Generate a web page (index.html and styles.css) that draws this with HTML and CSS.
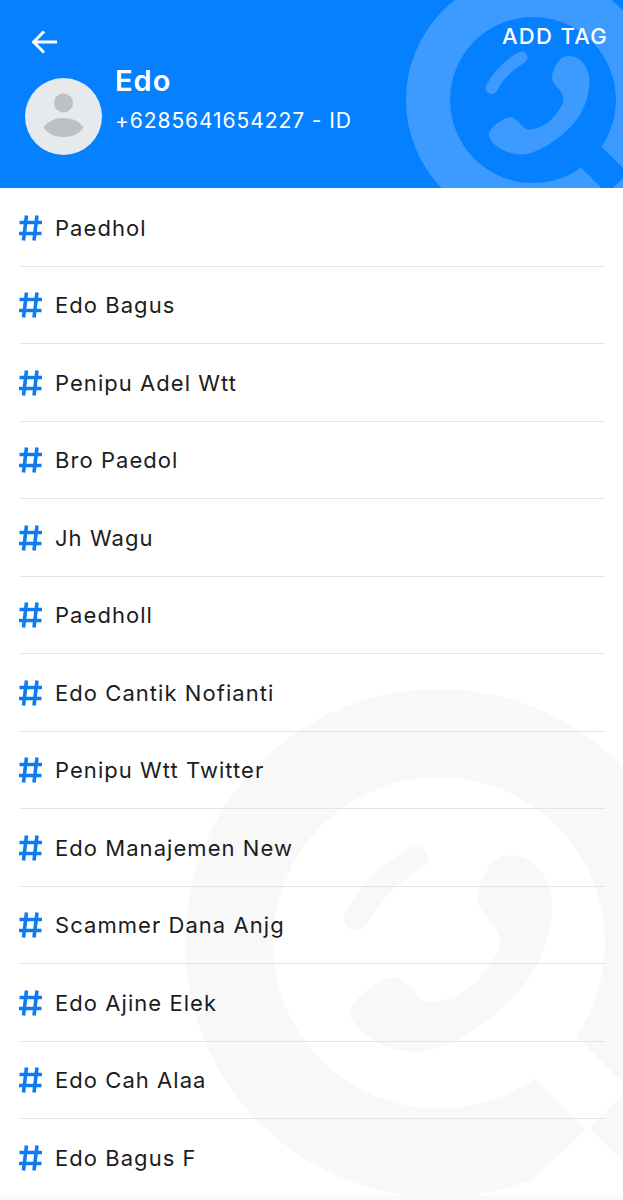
FILE: index.html
```html
<!DOCTYPE html>
<html lang="en">
<head>
    <meta charset="UTF-8">
    <meta name="viewport" content="width=device-width, initial-scale=1.0">
    <title>Edo - Tags</title>
    <link rel="stylesheet" href="styles.css">
</head>
<body>

<svg class="defs" width="0" height="0">
    <!-- Q shaped logo, origin is the centre of the ring -->
    <symbol id="logo" viewBox="-260 -260 520 520" overflow="visible">
        <circle class="logo-mark logo-ring" cx="0" cy="0" r="210"/>
        <polygon class="logo-cut" points="100,56 240,196 240,320 90,240 147,186 57,96"/>
        <polygon class="logo-mark" points="151,185 190,146 262,218 223,257"/>
        <path class="logo-arc" d="M-23,-85 Q-60,-65 -83,-24"/>
        <path class="logo-mark" d="M72,-88 C95,-88 113,-65 113,-38 C113,0 95,35 72,57 C40,88 0,110 -25,109 C-50,108 -75,96 -86,78 C-92,68 -88,60 -72,47 C-60,38 -50,33 -42,35 C-32,37 -25,50 -16,57 C-8,62 12,58 31,44 C48,30 62,8 61,-3 C60,-15 48,-25 41,-35 C36,-43 38,-55 46,-70 C52,-82 62,-88 72,-88Z"/>
    </symbol>
    <symbol id="hash" viewBox="0 0 25 26">
        <path d="M8.500,0.500 L5.500,25.500 M19,0.500 L16,25.500 M1.500,7.500 H24 M1,18.500 H23.500"/>
    </symbol>
</svg>

<header class="header">
    <svg class="logo logo-small"><use href="#logo"/></svg>
    <div class="top-bar">
        <svg class="back-icon" viewBox="0 0 26 24">
            <path d="M25,12 H2 M12,1.500 L1.500,12 L12,22.500"/>
        </svg>
        <span class="add-tag">ADD TAG</span>
    </div>
    <div class="profile">
        <div class="avatar">
            <svg viewBox="0 0 77 77">
                <circle cx="38.500" cy="25" r="9.500"/>
                <path d="M18.500,49.500 C23,43 30,40 38.500,40 C47,40 54,43 58.500,49.500 C54,56 47,59 38.500,59 C30,59 23,56 18.500,49.500Z"/>
            </svg>
        </div>
        <div class="profile-text">
            <div class="name">Edo</div>
            <div class="phone">+6285641654227 - ID</div>
        </div>
    </div>
</header>

<main class="list">
    <svg class="logo logo-large"><use href="#logo"/></svg>
    <div class="row"><svg class="hash"><use href="#hash"/></svg><span>Paedhol</span></div>
    <div class="row"><svg class="hash"><use href="#hash"/></svg><span>Edo Bagus</span></div>
    <div class="row"><svg class="hash"><use href="#hash"/></svg><span>Penipu Adel Wtt</span></div>
    <div class="row"><svg class="hash"><use href="#hash"/></svg><span>Bro Paedol</span></div>
    <div class="row"><svg class="hash"><use href="#hash"/></svg><span>Jh Wagu</span></div>
    <div class="row"><svg class="hash"><use href="#hash"/></svg><span>Paedholl</span></div>
    <div class="row"><svg class="hash"><use href="#hash"/></svg><span>Edo Cantik Nofianti</span></div>
    <div class="row"><svg class="hash"><use href="#hash"/></svg><span>Penipu Wtt Twitter</span></div>
    <div class="row"><svg class="hash"><use href="#hash"/></svg><span>Edo Manajemen New</span></div>
    <div class="row"><svg class="hash"><use href="#hash"/></svg><span>Scammer Dana Anjg</span></div>
    <div class="row"><svg class="hash"><use href="#hash"/></svg><span>Edo Ajine Elek</span></div>
    <div class="row"><svg class="hash"><use href="#hash"/></svg><span>Edo Cah Alaa</span></div>
    <div class="row"><svg class="hash"><use href="#hash"/></svg><span>Edo Bagus F</span></div>
</main>

</body>
</html>
```

FILE: styles.css
```css
html, body {
    margin: 0;
    height: 1200px;
    overflow: hidden;
}
body {
    font-family: Inter, "Liberation Sans", sans-serif;
    background-color: #fafafa;
    color: #1c1c1c;
}
.defs {
    position: absolute;
}

/* Watermark logo, used in the header and behind the list */
.logo {
    position: absolute;
    overflow: hidden;
}
.logo-mark {
    fill: var(--mark);
}
.logo-ring {
    fill: none;
    stroke: var(--mark);
    stroke-width: 88;
}
.logo-cut {
    fill: var(--cut);
}
.logo-arc {
    fill: none;
    stroke: var(--mark);
    stroke-width: 24;
    stroke-linecap: round;
}
.logo-small {
    --mark: #3d9bff;
    --cut: #0580ff;
    left: 403px;
    top: -30px;
    width: 260px;
    height: 260px;
}
.logo-large {
    --mark: #f8f8f8;
    --cut: #ffffff;
    left: 179px;
    top: 495px;
    width: 520px;
    height: 520px;
}

.header {
    position: relative;
    height: 188px;
    background-color: #0580ff;
    color: white;
    overflow: hidden;
}
.top-bar {
    position: relative;
    display: flex;
    justify-content: space-between;
    padding: 24px 15px 0 32px;
}
.back-icon {
    width: 26px;
    height: 24px;
    margin-top: 6px;
    fill: none;
    stroke: white;
    stroke-width: 3;
}
.add-tag {
    font-size: 22px;
    font-weight: 500;
    line-height: 26px;
    letter-spacing: 1.3px;
    margin-top: -1px;
}
.profile {
    position: relative;
    display: flex;
    align-items: center;
    gap: 13px;
    padding: 0 0 0 25px;
    margin-top: -2px;
}
.avatar {
    width: 77px;
    height: 77px;
    border-radius: 50%;
    background-color: #e7eaed;
    margin-top: 26px;
}
.avatar svg {
    display: block;
    fill: #b9c2c6;
}
.profile-text {
    padding-bottom: 10px;
}
.name {
    font-size: 29px;
    font-weight: 600;
    line-height: 34px;
    letter-spacing: 1px;
}
.phone {
    font-size: 21px;
    line-height: 26px;
    margin-top: 10px;
    letter-spacing: 0.92px;
}

.list {
    position: relative;
    box-sizing: border-box;
    height: 1007px;
    padding-top: 1px;
    background-color: white;
    overflow: hidden;
}
.row {
    position: relative;
    box-sizing: border-box;
    height: 77.5px;
    margin: 0 18px 0 20px;
    padding-top: 1px;
    display: flex;
    align-items: center;
    gap: 12px;
    font-size: 22px;
    letter-spacing: 1.05px;
    border-bottom: 1px solid #e4e4e4;
}
.row:last-child {
    border-bottom: none;
}
.hash {
    width: 25px;
    height: 26px;
    margin-left: -2px;
    fill: none;
    stroke: #0f7bf0;
    stroke-width: 3.6;
}
```
